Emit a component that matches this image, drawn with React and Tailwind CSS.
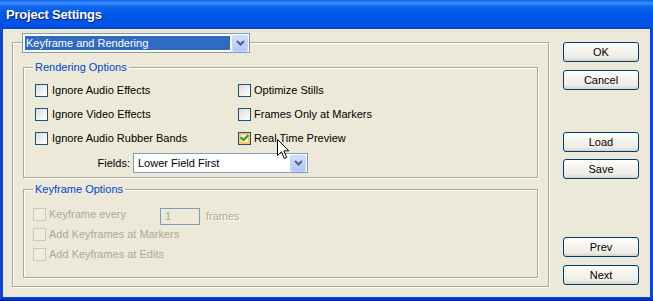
import React from "react";

const etched = "border border-[#ACA899] shadow-[inset_1px_1px_0_#FFFFFF,1px_1px_0_#FFFFFF]";

function Check({ checked, hot, disabled }) {
  if (disabled) {
    return <span className="block w-[13px] h-[13px] shrink-0 border border-[#CAC8BB] bg-[#EFEDE3]" />;
  }
  return (
    <span className="relative block w-[13px] h-[13px] shrink-0 border border-[#1C5180] bg-[linear-gradient(135deg,#DCDCD7_0%,#F2F2EE_60%,#FFFFFF_100%)]">
      {hot && <span className="absolute inset-0 border-2 border-[#F9C66A] bg-[#FFF6DF]" />}
      {checked && (
        <svg className="absolute left-0 top-0" width="11" height="11" viewBox="0 0 11 11">
          <polyline points="2.5,5 4.5,7 8.5,3" fill="none" stroke="#21A121" strokeWidth="2.2" strokeLinecap="square" />
        </svg>
      )}
    </span>
  );
}

function Row({ label, checked, hot, gap = "gap-[4px]" }) {
  return (
    <div className={`flex h-[13px] items-center ${gap}`}>
      <Check checked={checked} hot={hot} />
      <span className="leading-[13px] whitespace-nowrap">{label}</span>
    </div>
  );
}

function Chevron() {
  return (
    <span className="flex h-[17px] w-[16px] items-center justify-center rounded-[2px] border border-[#C3D3FD] bg-[linear-gradient(to_bottom,#D2DEFC_0%,#C1D3FB_50%,#B2C7F6_100%)]">
      <svg width="9" height="6" viewBox="0 0 9 6">
        <polyline points="1,1 4.5,4.5 8,1" fill="none" stroke="#4D6185" strokeWidth="2" />
      </svg>
    </span>
  );
}

function Combo({ text, selected, className }) {
  return (
    <div className={`flex h-[20px] items-center border border-[#7F9DB9] bg-white ${className}`}>
      <div className="h-full flex-1 p-[2px]">
        <div
          className={
            selected
              ? "flex h-full items-center bg-[#316AC5] px-[1px] text-white"
              : "flex h-full items-center px-[2px] text-black"
          }
        >
          <span className="leading-[13px] whitespace-nowrap">{text}</span>
        </div>
      </div>
      <div className="pr-[1px]">
        <Chevron />
      </div>
    </div>
  );
}

function Button({ children, className = "" }) {
  return (
    <div
      className={`flex h-[20px] w-[76px] items-center justify-center rounded-[3px] border border-[#003C74] bg-[linear-gradient(to_bottom,#FFFFFF_0%,#F6F5F0_35%,#EDECE6_80%,#D8D2C6_100%)] text-black ${className}`}
    >
      <span className="leading-[13px]">{children}</span>
    </div>
  );
}

export default function App() {
  return (
    <div
      className="relative flex h-[301px] w-[653px] flex-col overflow-hidden text-[11px] text-black"
      style={{ fontFamily: '"Liberation Sans", Arial, sans-serif' }}
    >
      {/* Title bar */}
      <div className="flex h-[29px] items-center bg-[linear-gradient(to_bottom,#0A5DF0_0%,#3B8EF8_10%,#1167EE_22%,#0058E6_45%,#0055E8_75%,#0050E2_90%,#0047D2_100%)] pl-[6px]">
        <span className="text-[13px] font-bold leading-[15px] tracking-[-0.2px] text-white [text-shadow:1px_1px_0_#0A1883]">
          Project Settings
        </span>
      </div>

      {/* Body */}
      <div className="flex flex-1 border-x-[3px] border-[#0A45DC] bg-[#ECE9D8]">
        {/* Left column */}
        <div className="relative ml-[9px] w-[537px] pt-[4px]">
          <div className="relative pt-[9px]">
            <Combo text="Keyframe and Rendering" selected className="absolute left-[10px] top-0 z-10 w-[228px]" />
            <div className={`h-[245px] w-[537px] ${etched} pl-[10px] pt-[24px]`}>
              {/* Rendering Options */}
              <div className={`relative h-[111px] w-[515px] ${etched} pl-[11px] pt-[16px]`}>
                <span className="absolute left-[9px] top-[-7px] bg-[#ECE9D8] px-[2px] leading-[13px] text-[#0046D5]">
                  Rendering Options
                </span>
                <div className="flex">
                  <div className="flex w-[203px] flex-col gap-[11px]">
                    <Row label="Ignore Audio Effects" />
                    <Row label="Ignore Video Effects" />
                    <Row label="Ignore Audio Rubber Bands" />
                  </div>
                  <div className="flex flex-col gap-[11px]">
                    <Row label="Optimize Stills" gap="gap-[3px]" />
                    <Row label="Frames Only at Markers" gap="gap-[3px]" />
                    <Row label="Real Time Preview" checked hot gap="gap-[3px]" />
                  </div>
                </div>
                <div className="mt-[8px] flex items-center">
                  <span className="w-[95px] text-right leading-[13px]">Fields:</span>
                  <Combo text="Lower Field First" className="ml-[3px] w-[175px]" />
                </div>
              </div>

              {/* Keyframe Options */}
              <div className={`relative mt-[11px] h-[89px] w-[515px] ${etched} pl-[9px] pt-[18px] text-[#ACA899]`}>
                <span className="absolute left-[9px] top-[-7px] bg-[#ECE9D8] px-[2px] leading-[13px] text-[#0046D5]">
                  Keyframe Options
                </span>
                <div className="flex flex-col gap-[7px]">
                  <div className="flex h-[13px] items-start">
                    <Check disabled />
                    <span className="ml-[3px] w-[111px] leading-[13px]">Keyframe every</span>
                    <span className="flex h-[17px] w-[40px] shrink-0 items-center border border-[#7F9DB9] bg-[#ECE9D8] pl-[4px] leading-[13px]">
                      1
                    </span>
                    <span className="ml-[6px] mt-[2px] leading-[13px] [text-shadow:1px_1px_0_#FFFFFF]">frames</span>
                  </div>
                  <div className="flex h-[13px] items-center gap-[3px]">
                    <Check disabled />
                    <span className="leading-[13px]">Add Keyframes at Markers</span>
                  </div>
                  <div className="flex h-[13px] items-center gap-[3px]">
                    <Check disabled />
                    <span className="leading-[13px]">Add Keyframes at Edits</span>
                  </div>
                </div>
              </div>
            </div>
          </div>
        </div>

        {/* Right column: buttons */}
        <div className="ml-[14px] flex flex-col pt-[13px]">
          <Button>OK</Button>
          <Button className="mt-[8px]">Cancel</Button>
          <Button className="mt-[42px]">Load</Button>
          <Button className="mt-[7px]">Save</Button>
          <Button className="mt-[58px]">Prev</Button>
          <Button className="mt-[8px]">Next</Button>
        </div>
      </div>

      {/* Bottom border */}
      <div className="h-[4px] bg-[linear-gradient(to_bottom,#0A48E0_0%,#0535C8_50%,#001A98_100%)]" />

      {/* Mouse cursor */}
      <svg className="absolute left-[277px] top-[139px]" width="13" height="21" viewBox="0 0 13 21">
        <path
          d="M0.5 0.5 L0.5 16.5 L4.5 12.8 L7.2 19.5 L9.6 18.5 L6.9 11.8 L11.8 11.8 Z"
          fill="#FFFFFF"
          stroke="#000000"
          strokeWidth="1"
          strokeLinejoin="miter"
        />
      </svg>
    </div>
  );
}
